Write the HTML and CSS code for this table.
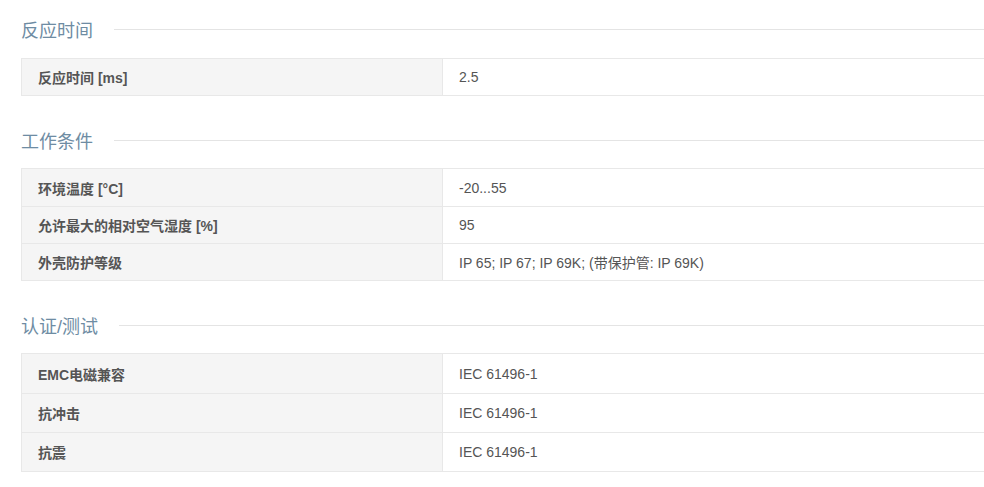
FILE: index.html
```html
<!DOCTYPE html>
<html lang="zh-CN">
<head>
<meta charset="utf-8">
<title>技术参数</title>
<link rel="stylesheet" href="styles.css">
</head>
<body>
<div class="page">
  <section class="group">
    <h2 class="group-title"><span class="group-text">反应时间</span><span class="group-line"></span></h2>
    <table class="spec">
      <tr><th>反应时间 [ms]</th><td>2.5</td></tr>
    </table>
  </section>
  <section class="group">
    <h2 class="group-title"><span class="group-text">工作条件</span><span class="group-line"></span></h2>
    <table class="spec spec-multi">
      <tr><th>环境温度 [°C]</th><td>-20...55</td></tr>
      <tr><th>允许最大的相对空气湿度 [%]</th><td>95</td></tr>
      <tr><th>外壳防护等级</th><td>IP 65; IP 67; IP 69K; (带保护管: IP 69K)</td></tr>
    </table>
  </section>
  <section class="group">
    <h2 class="group-title"><span class="group-text">认证/测试</span><span class="group-line"></span></h2>
    <table class="spec spec-tall">
      <tr><th>EMC电磁兼容</th><td>IEC 61496-1</td></tr>
      <tr><th>抗冲击</th><td>IEC 61496-1</td></tr>
      <tr><th>抗震</th><td>IEC 61496-1</td></tr>
    </table>
  </section>
</div>
</body>
</html>
```

FILE: styles.css
```css
html, body {
  margin: 0;
  padding: 0;
  background: #ffffff;
}

body {
  font-family: "Liberation Sans", "Noto Sans CJK SC", sans-serif;
  color: #555555;
  font-size: 14px;
}

.page {
  padding: 19px 0 0 21px;
}

.group {
  margin-bottom: 34px;
}

.group-title {
  display: flex;
  align-items: flex-start;
  gap: 21px;
  margin: 0 0 17px 0;
  font-size: 18px;
  font-weight: normal;
  color: #6e8ca3;
  line-height: 20px;
}

.group + .group .group-title {
  margin-bottom: 16px;
}

.group-text {
  white-space: nowrap;
  margin-top: 2px;
}

.group-line {
  flex: 1;
  height: 1px;
  margin-top: 10px;
  background: #e4e4e4;
}

.spec {
  width: 100%;
  border-collapse: collapse;
  table-layout: fixed;
}

.spec th,
.spec td {
  border: 1px solid #e8e8e8;
  height: 37px;
  padding: 0 16px;
  text-align: left;
  vertical-align: middle;
  box-sizing: border-box;
}

.spec th {
  width: 421px;
  background: #f5f5f5;
  font-weight: bold;
  color: #555555;
}

.spec td {
  border-right: none;
  color: #555555;
}

.spec-multi tr:first-child th,
.spec-multi tr:first-child td {
  height: 38px;
}

.spec-tall th,
.spec-tall td {
  height: 39px;
}

.spec-tall tr:first-child th,
.spec-tall tr:first-child td {
  height: 40px;
}
```
